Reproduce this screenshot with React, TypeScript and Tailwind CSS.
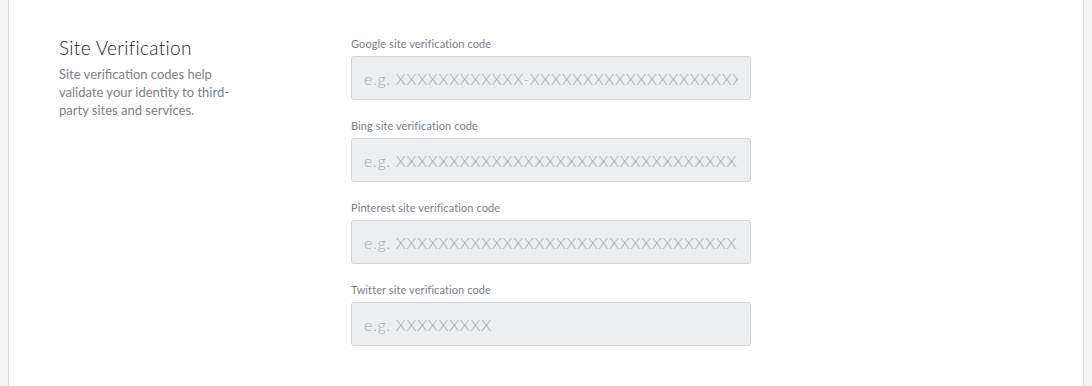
const fields = [
  {
    label: "Google site verification code",
    placeholder: "e.g. XXXXXXXXXXXX-XXXXXXXXXXXXXXXXXXXXXXXXXXX",
  },
  {
    label: "Bing site verification code",
    placeholder: "e.g. XXXXXXXXXXXXXXXXXXXXXXXXXXXXXXXXXXXX",
  },
  {
    label: "Pinterest site verification code",
    placeholder: "e.g. XXXXXXXXXXXXXXXXXXXXXXXXXXXXXXXXXXXX",
  },
  {
    label: "Twitter site verification code",
    placeholder: "e.g. XXXXXXXXX",
  },
];

export default function App() {
  return (
    <main
      className="min-h-[386px] bg-[#f4f4f4] px-2"
      style={{ fontFamily: "Lato, 'Noto Sans', sans-serif" }}
    >
      <section className="flex min-h-[386px] border-x border-[#dcdcdc] bg-white pl-[50px] pt-[36px]">
        {/* LEFT */}
        <div className="w-[292px] shrink-0">
          <h2 className="text-[19px] font-light leading-[24px] tracking-[0.3px] text-[#1c1c1c]">
            Site Verification
          </h2>
          <p className="mt-[5px] w-[186px] text-[13px] leading-[18px] text-[#7d8085]">
            Site verification codes help validate your identity to third-party
            sites and services.
          </p>
        </div>

        {/* FIELDS */}
        <div className="flex flex-col gap-[18px]">
          {fields.map((f) => (
            <label key={f.label} className="block">
              <span className="block text-[11px] leading-[16px] tracking-[0.1px] text-[#7a7e83]">
                {f.label}
              </span>
              <input
                type="text"
                placeholder={f.placeholder}
                className="mt-[4px] block h-[44px] w-[400px] rounded-[3px] border border-[#d2d4d7] bg-[#eceef0] px-[12px] text-[16px] font-light tracking-[0.7px] text-[#333] outline-none placeholder:text-[#a4a7ab]"
              />
            </label>
          ))}
        </div>
      </section>
    </main>
  );
}
